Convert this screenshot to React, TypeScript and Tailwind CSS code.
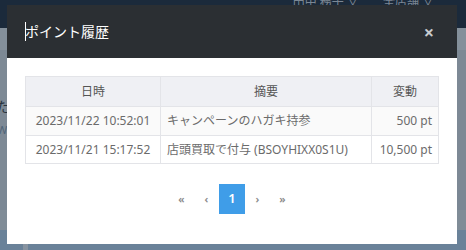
import React from "react";

export default function App() {
  const font = { fontFamily: '"Noto Sans", "Noto Sans CJK JP", sans-serif' };
  return (
    <div className="relative w-[466px] h-[250px] overflow-hidden bg-[#7d8995]" style={font}>
      {/* background page (dimmed) */}
      <div className="flex flex-col h-full">
        <div className="h-[28px] bg-[#1b2a3b] flex items-start justify-end gap-6 pr-8 text-[12px] text-[#7b8794] leading-none">
          <span className="-mt-[4px]">田中 務子 ∨</span>
          <span className="-mt-[4px]">全店舗 ∨</span>
        </div>
        <div className="h-[22px] bg-[#84909b]" />
        <div className="flex-1 bg-[#7d8995] relative">
          <span className="absolute left-[-4px] top-[46px] text-[14px] text-[#2a3440]">た</span>
          <span className="absolute left-[-3px] top-[72px] text-[11px] text-[#4f6478]">W</span>
        </div>
        <div className="h-[20px] bg-[#7a8794]" />
        <div className="h-[20px] bg-[#808c97]" />
        <div className="h-[20px] bg-[#6a8299] flex">
          <div className="ml-[23px] w-[5px] h-full bg-[#8793a0]" />
        </div>
      </div>

      {/* modal */}
      <div className="absolute left-[7px] top-[5px] w-[450px] h-[239px] bg-white flex flex-col">
        <div className="h-[53px] bg-[#2b2f33] flex items-center justify-between pl-[18px] pr-[23px]">
          <div className="flex items-center">
            <span className="w-px h-[19px] bg-white mr-[-1px]" />
            <span className="text-white text-[14px]">ポイント履歴</span>
          </div>
          <span className="text-[#c8cbcf] text-[18px] leading-none font-bold">×</span>
        </div>
        <div className="px-[18px] pt-[18px]">
          <table className="w-[414px] border-collapse text-[12px] text-[#6b6b6b]">
            <thead>
              <tr className="bg-[#eff0f4] h-[30px]">
                <th className="border border-[#e3e4e8] font-normal w-[135px] text-[#555]">日時</th>
                <th className="border border-[#e3e4e8] font-normal w-[211px] text-[#555]">摘要</th>
                <th className="border border-[#e3e4e8] font-normal text-[#555]">変動</th>
              </tr>
            </thead>
            <tbody>
              <tr className="bg-[#fafafa] h-[29px]">
                <td className="border border-[#e3e4e8] text-center">2023/11/22 10:52:01</td>
                <td className="border border-[#e3e4e8] px-[6px]">キャンペーンのハガキ持参</td>
                <td className="border border-[#e3e4e8] text-right pr-[6px]">500 pt</td>
              </tr>
              <tr className="bg-white h-[28px]">
                <td className="border border-[#e3e4e8] text-center">2023/11/21 15:17:52</td>
                <td className="border border-[#e3e4e8] px-[6px]">店頭買取で付与 (BSOYHIXX0S1U)</td>
                <td className="border border-[#e3e4e8] text-right pr-[6px]">10,500 pt</td>
              </tr>
            </tbody>
          </table>
        </div>
        <div className="flex justify-center items-center mt-[20px] text-[11px] text-[#888] font-semibold">
          <span className="w-[25px] text-center">«</span>
          <span className="w-[25px] text-center">‹</span>
          <span className="w-[26px] h-[30px] bg-[#3f9de8] text-white text-[13px] font-semibold flex items-center justify-center">1</span>
          <span className="w-[25px] text-center">›</span>
          <span className="w-[25px] text-center">»</span>
        </div>
      </div>
    </div>
  );
}
